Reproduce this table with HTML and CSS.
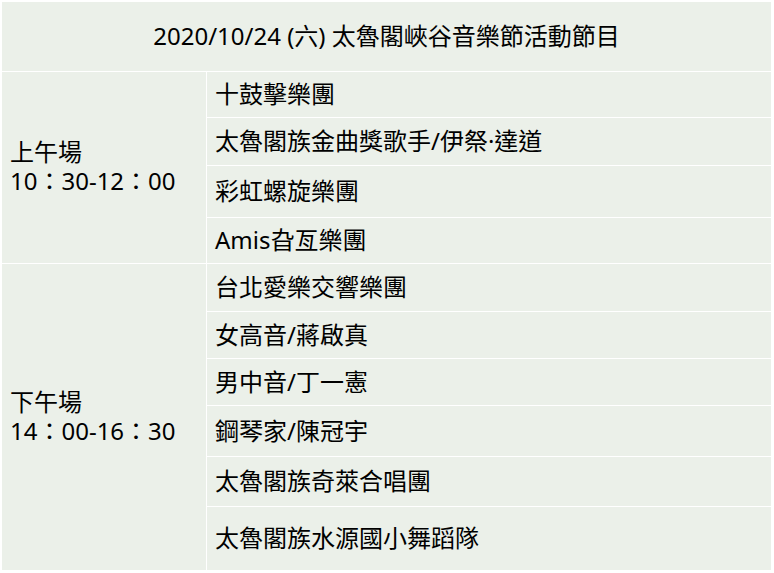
FILE: index.html
```html
<!DOCTYPE html>
<html lang="zh-Hant">
<head>
<meta charset="utf-8">
<title>2020/10/24 (六) 太魯閣峽谷音樂節活動節目</title>
<link rel="stylesheet" href="styles.css">
</head>
<body>
<div class="schedule">
  <div class="cell title">2020/10/24 (六) 太魯閣峽谷音樂節活動節目</div>

  <div class="cell session">
    <div class="session-text"><span class="line">上午場</span><span class="line">10：30-12：00</span></div>
  </div>
  <div class="acts">
    <div class="cell act h45">十鼓擊樂團</div>
    <div class="cell act h47">太魯閣族金曲獎歌手/伊祭·達道</div>
    <div class="cell act h51">彩虹螺旋樂團</div>
    <div class="cell act h45">Amis旮亙樂團</div>
  </div>

  <div class="cell session">
    <div class="session-text"><span class="line">下午場</span><span class="line">14：00-16：30</span></div>
  </div>
  <div class="acts">
    <div class="cell act h47">台北愛樂交響樂團</div>
    <div class="cell act h46">女高音/蔣啟真</div>
    <div class="cell act h46">男中音/丁一憲</div>
    <div class="cell act h50">鋼琴家/陳冠宇</div>
    <div class="cell act h49">太魯閣族奇萊合唱團</div>
    <div class="cell act h63">太魯閣族水源國小舞蹈隊</div>
  </div>
</div>
</body>
</html>
```

FILE: styles.css
```css
html, body {
  margin: 0;
  padding: 0;
  background: #ffffff;
}

body {
  width: 774px;
  height: 573px;
  overflow: hidden;
  font-family: "Noto Sans", "Noto Sans CJK TC", sans-serif;
  font-size: 24px;
  line-height: 29px;
  color: #000000;
}

.schedule {
  display: grid;
  grid-template-columns: 204px 1fr;
  grid-template-rows: 69px auto auto;
  gap: 1px;
  padding: 2px 3px 3px 2px;
  background: #ffffff;
}

.cell {
  background: #ebf0e9;
  box-sizing: border-box;
  display: flex;
  align-items: center;
}

.title {
  grid-column: 1 / 3;
  justify-content: center;
  padding-bottom: 3px;
}

.session {
  padding-left: 8px;
  padding-bottom: 3px;
}

.session-text {
  display: flex;
  flex-direction: column;
}

.line {
  display: block;
  height: 29px;
  line-height: 29px;
}

.acts {
  display: flex;
  flex-direction: column;
  gap: 1px;
  background: #ffffff;
}

.act {
  padding-left: 8px;
  padding-bottom: 2px;
}

.h45 { height: 45px; }
.h46 { height: 46px; }
.h47 { height: 47px; }
.h49 { height: 49px; }
.h50 { height: 50px; }
.h51 { height: 51px; }
.h63 { height: 63px; }
```
